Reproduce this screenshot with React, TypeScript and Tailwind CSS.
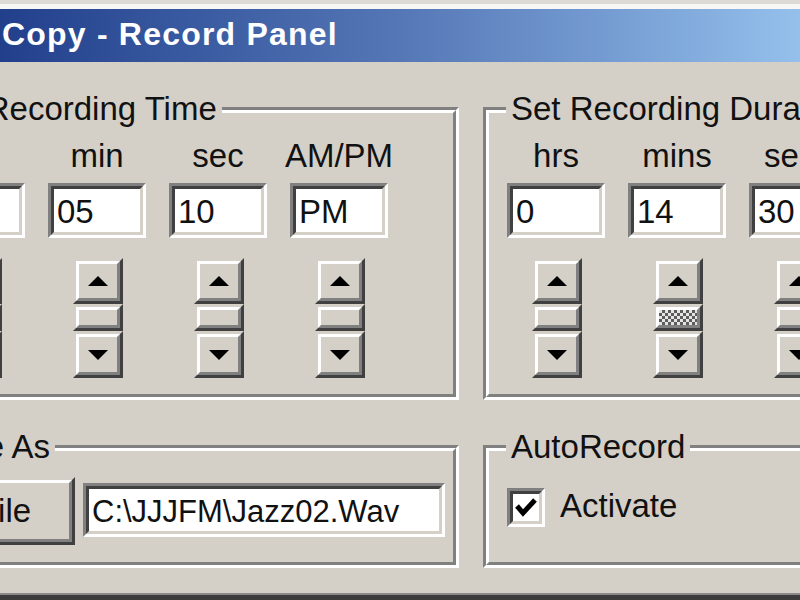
import React from "react";

function Raised({ className = "", innerClass = "", children }: { className?: string; innerClass?: string; children?: React.ReactNode }) {
  return (
    <div className={`border-[3px] border-t-[#d4d0c8] border-l-[#d4d0c8] border-r-[#404040] border-b-[#404040] ${className}`}>
      <div className={`w-full h-full border-[3px] border-t-white border-l-white border-r-[#808080] border-b-[#808080] flex items-center justify-center ${innerClass}`}>
        {children}
      </div>
    </div>
  );
}

function Sunken({ className = "", innerClass = "", children }: { className?: string; innerClass?: string; children?: React.ReactNode }) {
  return (
    <div className={`border-[3px] border-t-[#808080] border-l-[#808080] border-r-white border-b-white ${className}`}>
      <div className={`w-full h-full border-[3px] border-t-[#404040] border-l-[#404040] border-r-[#d4d0c8] border-b-[#d4d0c8] bg-white overflow-hidden ${innerClass}`}>
        {children}
      </div>
    </div>
  );
}

function Group({ legend, legendClass, className = "", children }: { legend: string; legendClass: string; className?: string; children?: React.ReactNode }) {
  return (
    <div className={`relative shrink-0 border-[3px] border-t-[#808080] border-l-[#808080] border-r-white border-b-white ${className}`}>
      <div className="w-full h-full border-[3px] border-t-white border-l-white border-r-[#808080] border-b-[#808080]">
        {children}
      </div>
      <span className={`absolute top-[-19px] bg-[#d4d0c8] px-[5px] text-[33px] leading-[36px] whitespace-nowrap ${legendClass}`}>
        {legend}
      </span>
    </div>
  );
}

function Up() {
  return (
    <svg width="20" height="10" viewBox="0 0 20 10">
      <polygon points="10,0 20,10 0,10" fill="#000" />
    </svg>
  );
}

function Down() {
  return (
    <svg width="20" height="10" viewBox="0 0 20 10">
      <polygon points="0,0 20,0 10,10" fill="#000" />
    </svg>
  );
}

function TimeCol({ label, value, active = false }: { label: string; value: string; active?: boolean }) {
  return (
    <div className="w-[98px] flex flex-col items-center shrink-0">
      <div className="h-[36px] leading-[36px] text-[33px] whitespace-nowrap">{label}</div>
      <Sunken className="mt-[9px] w-[98px] h-[55px]" innerClass="pl-[3px] pt-[5px] text-[33px] leading-[36px]">
        {value}
      </Sunken>
      <div className="mt-[20px] w-[50px] self-start ml-[25px] flex flex-col">
        <Raised className="h-[46px]">
          <Up />
        </Raised>
        {active ? (
          <Raised
            className="h-[27px]"
            innerClass="bg-[repeating-conic-gradient(#5c5c5c_0%_25%,#e4e4e4_0%_50%)] bg-[length:6px_6px]"
          />
        ) : (
          <Raised className="h-[27px]" />
        )}
        <Raised className="h-[47px]">
          <Down />
        </Raised>
      </div>
    </div>
  );
}

export default function App() {
  return (
    <div className="w-[800px] h-[600px] overflow-hidden flex flex-col bg-[#d4d0c8] text-[#111] font-['Liberation_Sans',Arial,sans-serif]">
      <div className="h-[4px] bg-[#dcdad5] shrink-0" />
      <div className="h-[5px] bg-[#f7f7f5] shrink-0" />
      <div className="h-[53px] shrink-0 flex items-center pb-[3px] pl-[2px] bg-gradient-to-r from-[#223f8c] via-[#5577b6] to-[#95c0ec]">
        <span className="text-white font-bold text-[32px] tracking-[1.2px] whitespace-nowrap leading-[40px]">
          Copy - Record Panel
        </span>
      </div>

      <div className="h-[531px] shrink-0 overflow-hidden pt-[45px] flex flex-col gap-[45px]">
        <div className="flex gap-[24px] -ml-[97px]">
          <Group legend="Set Recording Time" legendClass="left-[16px]" className="w-[556px] h-[293px]">
            <div className="flex pl-[18px] pt-[25px] gap-[23px]">
              <TimeCol label="hr" value="11" />
              <TimeCol label="min" value="05" />
              <TimeCol label="sec" value="10" />
              <TimeCol label="AM/PM" value="PM" />
            </div>
          </Group>
          <Group legend="Set Recording Duration" legendClass="left-[20px]" className="w-[420px] h-[293px]">
            <div className="flex pl-[18px] pt-[25px] gap-[23px]">
              <TimeCol label="hrs" value="0" />
              <TimeCol label="mins" value="14" active />
              <TimeCol label="secs" value="30" />
            </div>
          </Group>
        </div>

        <div className="flex gap-[24px] -ml-[97px]">
          <Group legend="Save As" legendClass="left-[18px]" className="w-[556px] h-[123px]">
            <div className="flex items-start pl-[25px]">
              <Raised className="mt-[26px] w-[141px] h-[68px] shrink-0" innerClass="text-[33px] leading-[36px]">
                File
              </Raised>
              <Sunken className="mt-[32px] ml-[8px] w-[362px] h-[54px] shrink-0" innerClass="pl-[3px] pt-[5px] text-[31px] leading-[36px] whitespace-nowrap">
                C:\JJJFM\Jazz02.Wav
              </Sunken>
            </div>
          </Group>
          <Group legend="AutoRecord" legendClass="left-[20px]" className="w-[420px] h-[123px]">
            <div className="flex items-start pl-[18px] pt-[37px]">
              <Sunken className="w-[38px] h-[39px] shrink-0" innerClass="flex items-center justify-center">
                <svg width="26" height="27" viewBox="0 0 26 27">
                  <polyline points="4,12 10,19 22,6" stroke="#000" strokeWidth="5" fill="none" />
                </svg>
              </Sunken>
              <span className="ml-[15px] text-[33px] leading-[36px] whitespace-nowrap">Activate</span>
            </div>
          </Group>
        </div>
      </div>

      <div className="h-[2px] bg-[#8a8a8a] shrink-0" />
      <div className="h-[5px] bg-[#3c3c3c] shrink-0" />
    </div>
  );
}
